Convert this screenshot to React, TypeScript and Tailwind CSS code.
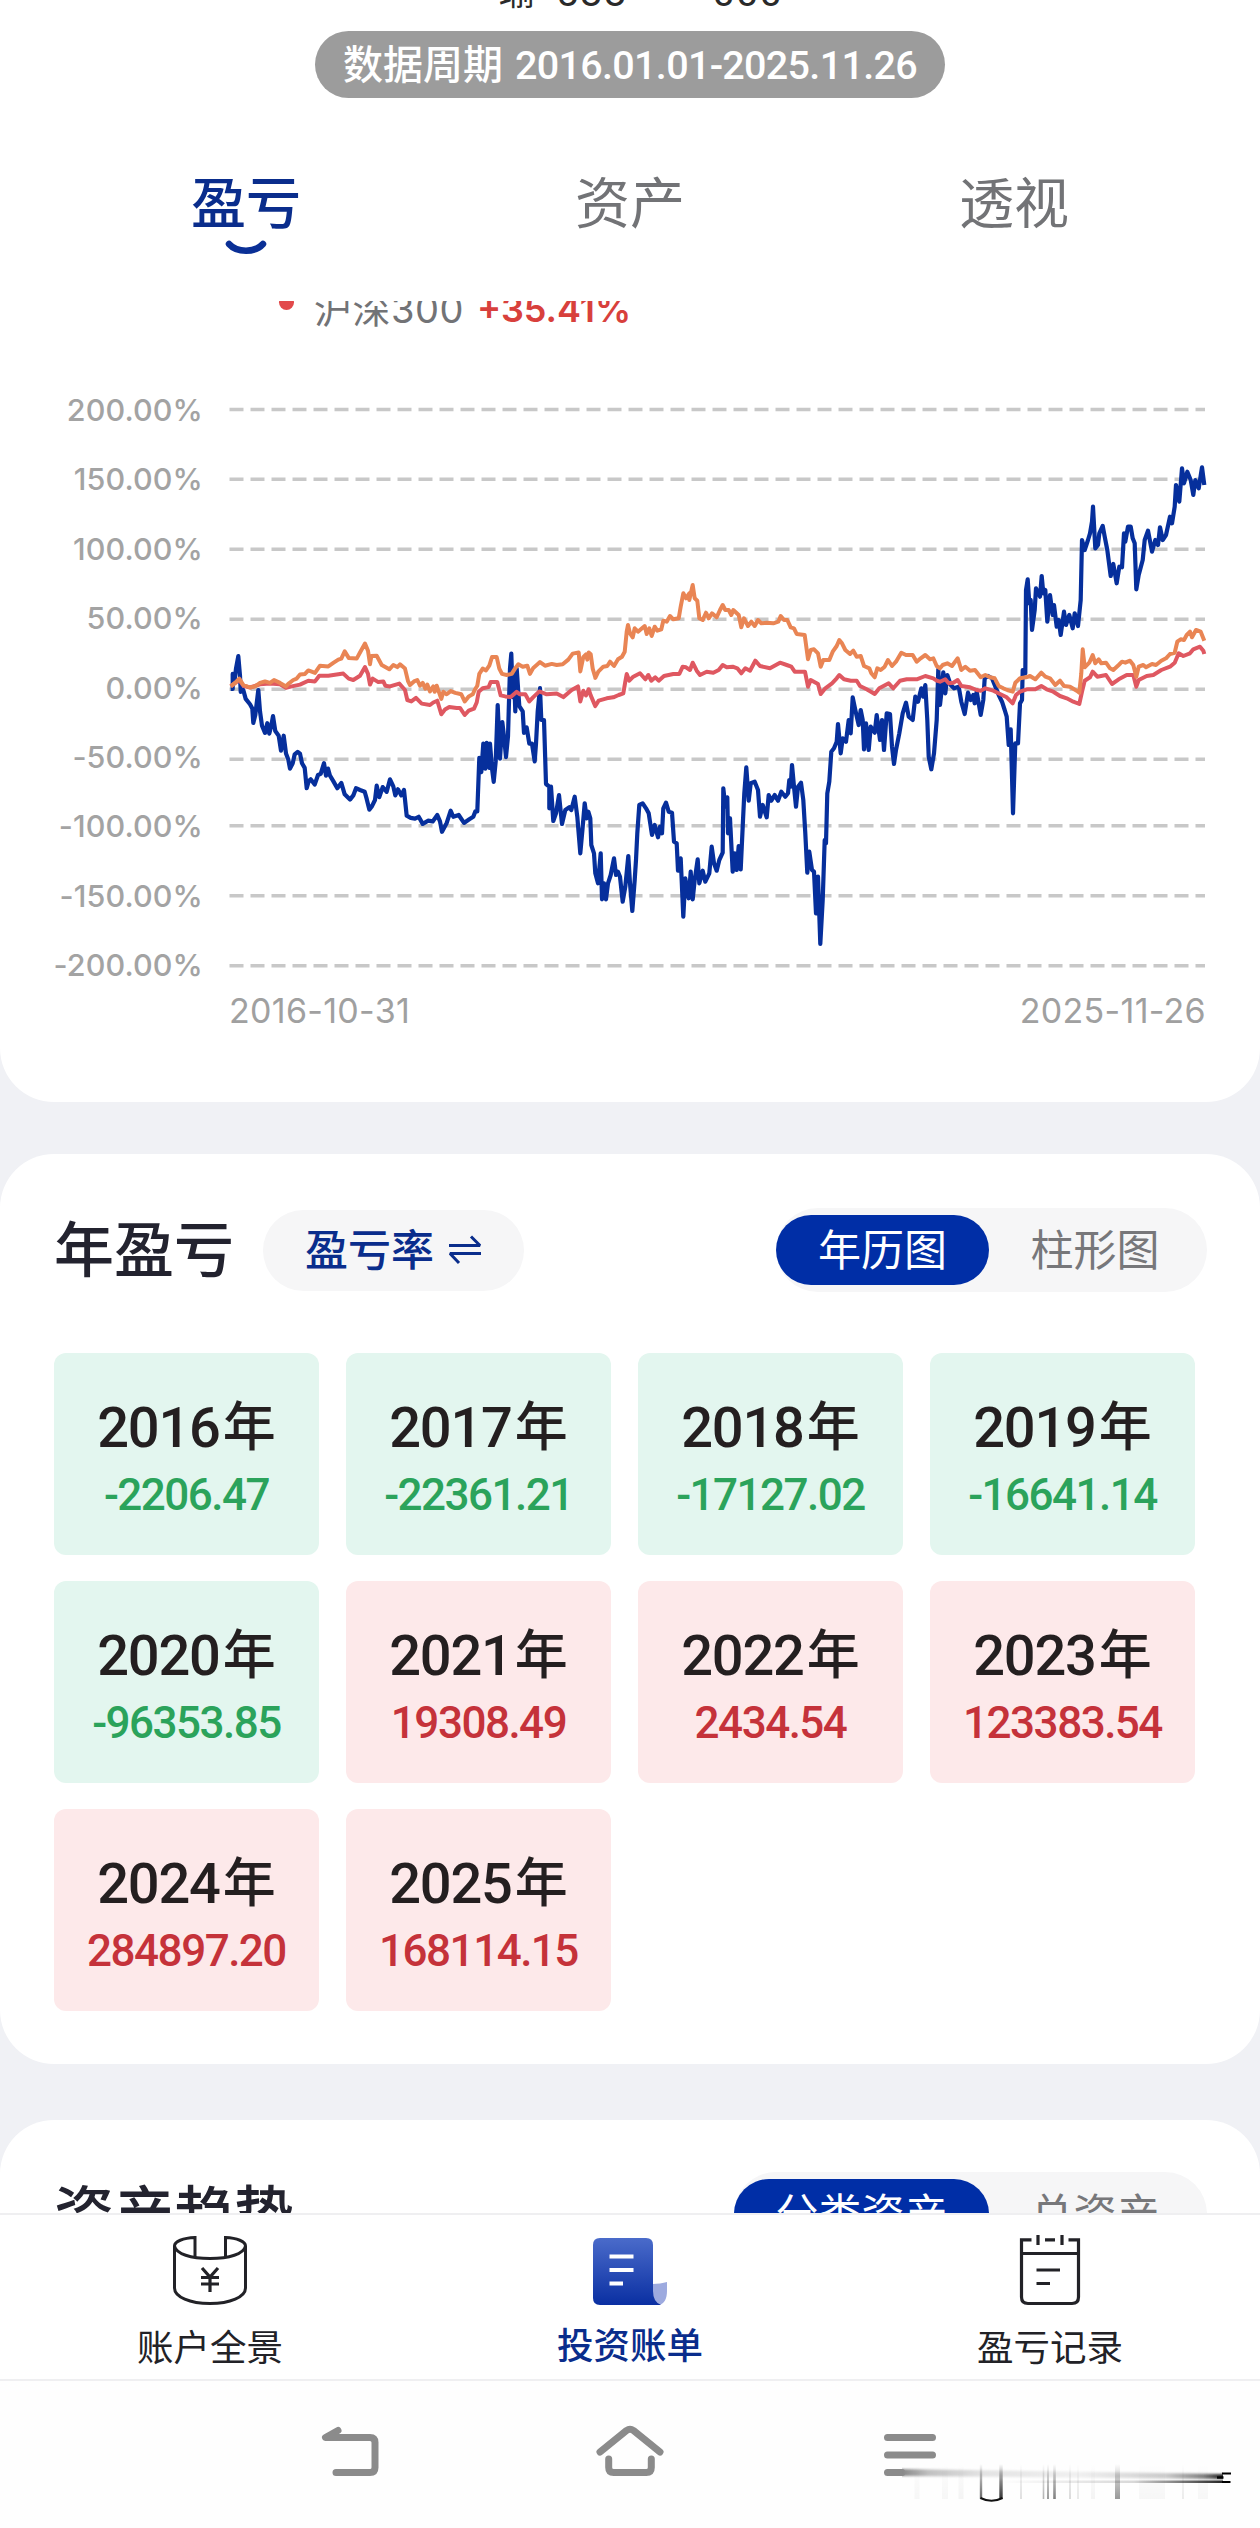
import React from "react";

const CJK = "font-['Roboto','Noto_Sans_CJK_SC',sans-serif]";
const LATIN = "font-['Inter','Noto_Sans_CJK_SC',sans-serif]";

/* Each series is stored in three spans; a span has an origin and a scale. */
type Span = { x: number; y: number; sx: number; sy: number };
const SPANS: Span[] = [
  { x: 200, y: 440, sx: 3, sy: 2.8 },
  { x: 540, y: 560, sx: 3, sy: 3 },
  { x: 860, y: 440, sx: 3, sy: 3 },
];

const ACCOUNT = [
  "92,697 98,697 98,655 104,672 108,640 115,605 120,660 122,705 130,700 137,725 150,740 157,752 160,792 166,770 175,700 180,760 186,800 195,820 202,793 208,822 214,800 219,773 226,815 236,828 243,870 251,828 258,878 265,895 270,920 278,905 284,880 293,873 300,878 306,905 314,918 320,975 326,955 332,950 344,965 354,938 362,935 372,905 378,940 384,920 390,940 400,955 412,975 424,960 434,992 450,1007 460,995 468,975 480,980 494,985 500,1005 508,1035 516,1025 525,1008 530,968 538,1000 548,972 560,985 570,950 580,970 586,995 594,978 604,995 612,980 620,1052 632,1058 645,1060 656,1055 668,1075 684,1066 698,1068 712,1050 720,1068 726,1097 740,1072 752,1038 760,1055 776,1050 792,1072 808,1062 820,1055 826,1040 832,1040 838,890 844,930 850,850 856,920 860,848 868,918 870,850 876,920 881,957 887,900 893,742 900,892 907,790 912,830 918,888 924,830 926,760 930,640 934,598 938,720 942,650 946,760 950,640 958,745 968,760 972,820 980,805 988,850 996,850 1004,900 1008,850 1013,760 1020,695",
  "0,385 4,480 12,480 18,672 28,680 28,745 33,680 40,783 48,760 57,705 66,792 76,750 88,742 94,750 104,710 112,770 121,880 128,800 134,730 140,775 145,755 151,775 154,855 162,880 166,940 174,970 182,880 186,1018 192,970 198,1018 204,970 212,945 222,895 228,945 234,935 240,950 248,1025 256,980 265,888 270,970 277,1053 284,960 288,900 292,820 298,735 308,730 318,745 326,760 336,825 344,795 354,832 360,800 366,820 370,745 378,728 386,755 396,758 402,845 410,850 414,932 422,895 430,1070 436,955 446,1015 452,935 458,1018 464,960 473,898 478,970 488,932 496,965 508,940 515,860 522,910 530,932 538,900 548,878 550,685 556,740 562,712 564,820 570,775 578,935 584,880 590,930 596,858 602,928 608,800 613,700 619,622 626,722 632,670 644,665 654,690 660,770 668,735 680,772 686,705 694,722 704,705 714,722 724,695 736,710 744,700 748,660 752,680 756,615 762,680 768,740 774,680 783,668 790,720 796,820 802,938 808,875 816,930 822,935 828,1060 834,950 841,1152 848,1020 854,840 858,850 862,700 868,665 874,575 882,565 890,545 894,492 902,580 908,535 918,545 926,480 932,520 938,412 946,450 956,495 962,450 968,480 972,568 978,490 986,570 992,500 1004,518 1010,465 1020,540 1026,480 1032,570 1040,460 1050,462 1056,560 1062,612 1068,570 1078,520 1088,460 1098,428 1106,470 1118,480 1126,410 1134,425 1144,385 1150,410 1156,375 1162,480 1166,590 1174,628 1182,580 1190,480",
  "235,688 240,795 244,760 250,697 256,760 262,705 272,735 282,745 296,740 304,785 314,822 324,758 332,780 340,765 344,790 350,755 362,825 370,780 374,715 384,708 396,715 404,735 416,765 426,785 434,810 440,830 446,915 452,868 459,1120 466,910 474,910 480,790 486,780 488,690 496,700 498,450 503,418 508,490 512,480 516,570 524,510 528,445 540,470 545,408 550,460 556,450 562,545 570,465 578,525 582,495 590,560 596,540 602,585 612,515 618,555 628,525 638,565 644,520 654,558 662,480 666,300 674,330 684,300 690,280 696,245 699,200 706,325 714,315 718,280 728,258 734,290 742,330 752,408 760,372 770,430 778,380 786,382 792,280 796,305 804,260 812,260 818,295 824,310 829,448 836,405 848,360 854,300 864,272 876,335 886,300 894,315 900,262 908,300 918,285 930,230 936,250 944,200 948,135 958,185 966,85 972,130 982,95 992,120 1000,165 1006,120 1016,145 1026,82 1033,135",
];

const FUND_INDEX = [
  "92,690 105,680 118,668 130,686 150,693 165,690 180,680 195,676 210,680 222,672 240,680 258,690 265,683 280,672 290,668 300,657 315,655 325,645 345,652 360,632 385,634 400,624 415,615 424,612 434,592 446,610 470,612 480,595 495,570 504,590 510,628 514,605 530,604 545,630 568,642 580,630 592,636 600,628 615,640 624,675 630,686 642,676 652,672 660,688 668,680 676,696 682,685 690,704 700,690 704,705 710,688 724,725 730,705 740,712 752,703 766,708 784,712 794,732 806,718 818,712 824,700 832,688 838,655 848,640 858,645 868,632 876,608 890,608 898,640 906,655 920,658 935,655 945,640 955,628 968,635 982,632 990,655 1000,638 1010,630 1020,622 1035,632 1055,627 1070,630 1088,628 1105,615 1118,598 1136,595 1141,648 1150,608 1158,600 1162,615 1166,595 1172,600 1178,640 1186,665",
  "166,354 175,335 190,320 202,318 210,305 222,318 234,298 246,290 254,275 260,215 264,195 270,220 278,232 284,205 294,215 306,205 314,198 320,222 328,205 335,228 344,200 352,212 364,208 370,182 380,185 390,168 400,178 416,175 422,140 430,100 438,115 448,100 448,120 458,75 464,115 472,122 478,175 488,180 498,158 506,175 516,160 530,172 540,150 548,135 556,150 566,150 574,165 580,150 596,165 604,202 612,175 624,198 634,185 644,198 654,180 664,190 680,188 700,190 715,185 722,168 732,180 742,180 752,202 762,205 770,222 794,225 804,298 812,270 822,268 834,280 842,320 850,300 868,300 878,275 890,258 898,240 906,250 916,270 930,282 940,272 950,290 962,288 972,318 988,325 994,340 1004,352 1012,325 1022,330 1034,320 1044,300 1056,318 1068,305 1084,278 1098,285 1118,285 1130,305 1142,295 1156,285 1170,298 1180,295 1190,318",
  "230,678 240,685 248,675 262,670 276,678 293,655 304,690 316,680 330,692 345,690 362,712 376,705 390,712 404,715 416,738 430,745 442,750 458,755 466,728 480,715 498,712 510,708 526,718 544,698 556,710 570,715 586,735 600,722 612,738 630,740 650,752 658,758 664,700 668,628 674,682 688,668 698,645 706,670 716,658 724,670 738,668 750,685 760,690 776,675 786,665 796,668 810,662 820,675 829,710 836,680 850,675 858,682 876,672 888,675 904,662 918,655 930,642 944,638 952,605 962,598 972,600 980,585 990,575 996,592 1008,570 1022,575 1033,602",
];

const CSI300 = [
  "92,690 118,672 130,688 150,693 180,684 210,682 240,684 258,694 275,690 300,685 325,674 345,676 358,660 385,660 430,654 446,668 460,672 480,660 495,636 504,655 510,685 518,668 535,678 550,676 556,688 570,690 598,682 615,700 622,728 634,732 648,722 665,738 690,742 700,735 712,730 724,768 735,755 748,748 770,750 780,750 794,770 806,758 822,752 830,735 836,705 848,695 866,692 872,678 892,678 902,715 916,718 932,720 950,705 960,712 976,712 988,732 1000,720 1018,704 1040,712 1070,710 1090,720 1115,700 1134,690 1141,732 1150,702 1158,715 1166,698 1172,715 1186,745",
  "166,438 176,422 200,415 220,412 236,405 250,400 256,365 260,342 268,362 280,350 300,340 316,358 325,345 334,362 346,352 356,362 372,348 400,342 418,342 428,320 438,322 450,330 458,308 470,332 480,345 500,335 520,338 536,330 548,315 560,322 578,320 592,325 604,340 616,325 630,332 646,302 660,318 690,325 720,308 740,315 754,320 764,335 795,335 804,380 812,360 834,372 842,402 856,385 876,370 890,355 898,345 912,358 932,362 950,362 960,378 980,388 1004,402 1018,385 1046,370 1060,385 1080,362 1100,358 1130,358 1156,348 1180,355 1190,362",
  "240,725 256,718 266,730 280,728 293,720 304,738 330,742 350,750 362,752 376,745 400,752 420,762 440,772 458,790 468,765 480,755 500,748 526,748 544,738 560,748 580,755 600,768 620,775 640,785 658,792 666,755 674,722 690,712 698,695 712,710 738,705 756,732 776,718 800,705 820,705 829,740 836,720 860,708 880,705 904,690 930,680 944,668 956,640 970,648 990,640 1000,628 1020,620 1030,632 1033,642",
];

function toPoints(series: string[]): string {
  return series
    .map((part, i) => {
      const s = SPANS[i];
      return part
        .split(" ")
        .map((pair) => {
          const [px, py] = pair.split(",").map(Number);
          return `${(s.x + px / s.sx).toFixed(1)},${(s.y + py / s.sy).toFixed(1)}`;
        })
        .join(" ");
    })
    .join(" ");
}

const GRID = [409.5, 479.3, 549.3, 619.3, 689.2, 759.2, 825.8, 895.7, 965.7];
const PERCENTS = ["200.00%", "150.00%", "100.00%", "50.00%", "0.00%", "-50.00%", "-100.00%", "-150.00%", "-200.00%"];

const YEARS = [
  { year: "2016", amount: "-2206.47" },
  { year: "2017", amount: "-22361.21" },
  { year: "2018", amount: "-17127.02" },
  { year: "2019", amount: "-16641.14" },
  { year: "2020", amount: "-96353.85" },
  { year: "2021", amount: "19308.49" },
  { year: "2022", amount: "2434.54" },
  { year: "2023", amount: "123383.54" },
  { year: "2024", amount: "284897.20" },
  { year: "2025", amount: "168114.15" },
];

function Header() {
  return (
    <header className="h-[301px] shrink-0 overflow-hidden bg-white">
      <div className="flex h-[31px] items-end justify-center">
        <div className="mb-[14px] ml-[22px] flex w-[284px] text-[40px] leading-[48px] text-[#2a2a2a]">
          <span className="w-[57px] text-[36px]">瑜</span>
          <span className="w-[157px] tracking-[1.5px]">588</span>
          <span className="tracking-[1px]">000</span>
        </div>
      </div>
      <div className="mx-auto flex h-[67px] w-[630px] items-center justify-center rounded-full bg-[#9c9c9c] pt-[3px] text-[40px] font-medium whitespace-pre text-white">
        <span>数据周期</span>
        <span className="ml-3 text-[39.5px] tracking-[-0.7px]">2016.01.01-2025.11.26</span>
      </div>
      <nav className="mx-[54px] mt-[68px] grid grid-cols-3 text-center text-[55px] leading-[76px] text-[#727376]">
        <div className="flex flex-col items-center font-medium text-[#0a2d8c]">
          <span>盈亏</span>
          <svg className="-mt-[3px]" width="44" height="18" viewBox="0 0 44 18" fill="none">
            <path d="M5 5C13 14 31 14 39 5" stroke="#0a2f96" strokeWidth="6.5" strokeLinecap="round" />
          </svg>
        </div>
        <span>资产</span>
        <span>透视</span>
      </nav>
    </header>
  );
}

function ProfitChart() {
  return (
    <section className={`h-[801px] overflow-hidden rounded-b-[54px] bg-white ${LATIN}`}>
      <div className="-mt-[17px] ml-[279px] flex h-[50px] items-center text-[38px] leading-[50px]">
        <i className="mt-[-13px] h-[15px] w-[15px] rounded-full bg-[#e2494b]" />
        <span className="ml-[20px] tracking-[0.5px] text-[#727376]">沪深300</span>
        <span className="ml-[13px] text-[36px] font-semibold text-[#d8403c]">+35.41%</span>
      </div>
      <div className="mt-[41px] flex">
        <div className="flex w-[203px] flex-col text-right text-[30.5px] font-medium tracking-[0.1px] text-[#a3a3a3]">
          {PERCENTS.map((p) => (
            <span key={p} className="h-[69.4px] leading-[69.4px]">
              {p}
            </span>
          ))}
        </div>
        <svg className="ml-[22px] shrink-0" width="985" height="615" viewBox="225 375 985 615" fill="none">
          {GRID.map((y) => (
            <line key={y} x1="229.5" x2="1205" y1={y} y2={y} stroke="#c8c8c8" strokeWidth="3.4" strokeDasharray="14 7" />
          ))}
          <polyline points={toPoints(ACCOUNT)} stroke="#062f9c" strokeWidth="4.2" strokeLinejoin="round" />
          <polyline points={toPoints(CSI300)} stroke="#df5861" strokeWidth="4" strokeLinejoin="round" />
          <polyline points={toPoints(FUND_INDEX)} stroke="#e98554" strokeWidth="4" strokeLinejoin="round" />
        </svg>
      </div>
      <div className="-mt-[11px] ml-[229px] flex w-[977px] justify-between text-[34px] leading-[44px] tracking-[0.3px] text-[#a0a0a0]">
        <span>2016-10-31</span>
        <span>2025-11-26</span>
      </div>
    </section>
  );
}

function SwapIcon() {
  return (
    <svg width="34" height="34" viewBox="0 0 34 34" fill="none" stroke="#0a2d8c" strokeWidth="3">
      <path d="M1 12.5H32L23 3.5" strokeLinejoin="bevel" />
      <path d="M33 20.500H2L11 30" strokeLinejoin="bevel" />
    </svg>
  );
}

function Segment({ left, right, leftClass }: { left: string; right: string; leftClass: string }) {
  return (
    <div className="flex h-[84px] items-center rounded-full bg-[#f6f6f7] text-[43px]">
      <span className={`flex h-[70px] items-center justify-center rounded-full bg-[#002ea6] pt-[2px] text-white ${leftClass}`}>
        {left}
      </span>
      <span className="w-[218px] pt-[2px] pr-1.5 text-center text-[#77777a]">{right}</span>
    </div>
  );
}

function YearlyCard() {
  return (
    <section className="mt-[52px] h-[910px] rounded-[54px] bg-white pt-[54px] pr-[53px] pl-[54px]">
      <div className="flex h-[84px] items-center">
        <h2 className="w-[209px] pt-[4px] text-[60px] leading-[84px] font-medium text-[#23232f]">年盈亏</h2>
        <div className="flex h-[81px] w-[261px] items-center justify-center gap-[14px] rounded-full bg-[#f6f6f7] text-[43px] font-medium text-[#0a2d8c]">
          <span className="pt-[2px]">盈亏率</span>
          <SwapIcon />
        </div>
        <div className="ml-auto">
          <Segment left="年历图" right="柱形图" leftClass="w-[213px]" />
        </div>
      </div>
      <div className="mt-[61px] grid w-[1141px] grid-cols-4 gap-x-[27px] gap-y-[26px]">
        {YEARS.map(({ year, amount }) => {
          const loss = amount.startsWith("-");
          return (
            <div
              key={year}
              className={`flex h-[202px] flex-col items-center rounded-[12px] pt-[38px] font-medium ${loss ? "bg-[#e3f6ef]" : "bg-[#fde9ea]"}`}
            >
              <div className="flex h-[74px] items-center leading-[74px] text-[#241f20]">
                <span className="text-[56px] tracking-[-1.2px]">{year}</span>
                <span className="ml-[3px] text-[53px]">年</span>
              </div>
              <span
                className={`text-[44px] leading-[60px] tracking-[-1.5px] ${loss ? "text-[#2ba35b]" : "text-[#c5323a]"}`}
              >
                {amount}
              </span>
            </div>
          );
        })}
      </div>
    </section>
  );
}

function TrendCard() {
  return (
    <section className="mt-[56px] h-[93px] overflow-hidden rounded-t-[54px] bg-white pt-[52px] pr-[53px] pl-[54px]">
      <div className="flex h-[84px] items-center justify-between">
        <h2 className="pt-[4px] text-[60px] leading-[84px] font-medium text-[#23232f]">资产趋势</h2>
        <Segment left="分类资产" right="总资产" leftClass="w-[255px]" />
      </div>
    </section>
  );
}

function PanoramaIcon() {
  return (
    <svg width="80" height="76" viewBox="170 2232 80 76" fill="none" stroke="#222227" strokeWidth="3">
      <path d="M195 2257V2237.500C183 2238 174.500 2241.500 174.500 2246V2288C174.500 2297 190 2303.500 210 2303.500S245.500 2297 245.500 2288V2246C245.500 2241.500 237 2238 225.500 2237.500V2256" />
      <path d="M174.500 2246C176 2254 191 2258.500 210 2258.500S244 2254 245.500 2246" />
      <path d="M202 2268L210 2277L218 2268M201 2277.500H219M201 2284H219M210 2277V2292" strokeWidth="3.2" />
    </svg>
  );
}

function BillIcon() {
  return (
    <svg width="80" height="76" viewBox="590 2232 80 76" fill="none">
      <defs>
        <linearGradient id="bill" x1="0" y1="0" x2="0" y2="1">
          <stop offset="0" stopColor="#4a6bca" />
          <stop offset="1" stopColor="#0a2fa2" />
        </linearGradient>
      </defs>
      <path d="M653 2284C657 2284 663 2283 667 2282V2291C667 2299 664 2304 659 2305C655 2305 652 2298 652 2292Z" fill="#9daadf" />
      <path d="M600 2238H646Q653 2238 653 2245V2291Q653 2302 661 2305H600Q593 2305 593 2298V2245Q593 2238 600 2238Z" fill="url(#bill)" />
      <path d="M609.500 2256.500H633.500M609.500 2270H633.500M609.500 2283.500H623" stroke="#fff" strokeWidth="4" />
    </svg>
  );
}

function RecordIcon() {
  return (
    <svg width="80" height="76" viewBox="1010 2232 80 76" fill="none" stroke="#222227" strokeWidth="3.2">
      <path d="M1031.500 2239.800H1021.500V2297Q1021.500 2303.500 1028 2303.500H1072Q1078.500 2303.500 1078.500 2297V2239.800H1068.500M1045 2239.800H1055" />
      <path d="M1038 2235V2245M1062 2235V2245M1021.500 2253.500H1078.500M1036.500 2270H1060M1036.500 2283.500H1050" />
    </svg>
  );
}

function TabBar() {
  const tabs = [
    { label: "账户全景", icon: <PanoramaIcon />, active: false },
    { label: "投资账单", icon: <BillIcon />, active: true },
    { label: "盈亏记录", icon: <RecordIcon />, active: false },
  ];
  return (
    <nav className="grid h-[168px] shrink-0 grid-cols-3 border-y-2 border-[#efeff1] bg-white">
      {tabs.map((t) => (
        <div key={t.label} className="flex flex-col items-center pt-[17px]">
          {t.icon}
          <span
            className={`text-[36.5px] leading-[48px] ${t.active ? "mt-[15px] font-medium text-[#0a2d8c]" : "mt-[17px] text-[#222227]"}`}
          >
            {t.label}
          </span>
        </div>
      ))}
    </nav>
  );
}

const STREAKS = [
  { x: 981, w: 2.4, o: 0.6 },
  { x: 1001, w: 3.4, o: 0.8 },
  { x: 1021, w: 1.2, o: 0.2 },
  { x: 1043.5, w: 1.6, o: 0.3 },
  { x: 1048, w: 2, o: 0.4 },
  { x: 1054.5, w: 2.6, o: 0.5 },
  { x: 1070, w: 1.4, o: 0.2 },
  { x: 1078, w: 1.2, o: 0.14 },
  { x: 1117.5, w: 5, o: 0.4 },
  { x: 1183, w: 1.2, o: 0.12 },
  { x: 917, w: 5, o: 0.03 },
  { x: 945, w: 6, o: 0.03 },
  { x: 961, w: 5, o: 0.04 },
  { x: 1093, w: 4, o: 0.04 },
  { x: 1152, w: 26, o: 0.03 },
  { x: 1203, w: 10, o: 0.03 },
];

function SystemBar() {
  return (
    <footer className="h-[147px] shrink-0 bg-[#fefefe]">
      <svg className="block" width="1260" height="147" viewBox="0 2381 1260 147" fill="none">
        <defs>
          <linearGradient id="smear" x1="903" x2="1223" y1="0" y2="0" gradientUnits="userSpaceOnUse">
            <stop offset="0" stopColor="#8a8a8a" />
            <stop offset="0.08" stopColor="#c0c0c0" />
            <stop offset="0.24" stopColor="#e2e2e2" />
            <stop offset="0.55" stopColor="#f0f0f0" />
            <stop offset="0.82" stopColor="#cccccc" />
            <stop offset="0.94" stopColor="#808080" />
            <stop offset="1" stopColor="#222" />
          </linearGradient>
          <linearGradient id="smearLow" x1="1000" x2="1223" y1="0" y2="0" gradientUnits="userSpaceOnUse">
            <stop offset="0" stopColor="#000" stopOpacity="0" />
            <stop offset="0.6" stopColor="#000" stopOpacity="0.15" />
            <stop offset="1" stopColor="#000" stopOpacity="0.85" />
          </linearGradient>
          <linearGradient id="streak" x1="0" x2="0" y1="2464" y2="2499" gradientUnits="userSpaceOnUse">
            <stop offset="0" stopColor="#000" stopOpacity="0" />
            <stop offset="0.5" stopColor="#000" stopOpacity="0.6" />
            <stop offset="1" stopColor="#000" />
          </linearGradient>
          <filter id="soft" x="-5%" y="-100%" width="110%" height="300%">
            <feGaussianBlur stdDeviation="0.3 1.2" />
          </filter>
        </defs>
        <g stroke="#8b8b8b" strokeWidth="7" strokeLinecap="round" strokeLinejoin="round">
          <path d="M338 2430.500L325.500 2437.500H370Q375 2437.500 375 2442.500V2467.500Q375 2472.500 370 2472.500H336" />
          <path d="M600 2452L626.500 2430.500Q630 2428 633.500 2430.500L660 2452" />
          <path d="M608.700 2459V2467.500Q608.700 2472.500 613.700 2472.500H646.300Q651.300 2472.500 651.300 2467.500V2459" />
          <path d="M887.500 2437.500H932.500M887.500 2455H932.500M887.500 2472.500H902" />
        </g>
        <path d="M902 2469L1223 2474V2479L902 2476Z" fill="url(#smear)" filter="url(#soft)" />
        <rect x="1000" y="2480.500" width="223" height="2.500" fill="url(#smearLow)" />
        {STREAKS.map((s) => (
          <rect key={s.x} x={s.x - s.w / 2} y="2464" width={s.w} height="35" fill="url(#streak)" opacity={s.o} />
        ))}
        <path d="M980.500 2498Q991.500 2503.500 1002.500 2498" stroke="#111" strokeWidth="2" />
        <path d="M1222 2473.500H1231M1222 2482H1230.500" stroke="#000" strokeWidth="2.200" />
        <path d="M1217 2477.500H1223.500" stroke="#000" strokeWidth="2.400" />
      </svg>
    </footer>
  );
}

export default function App() {
  return (
    <div className={`flex h-[2528px] w-[1260px] flex-col overflow-hidden bg-[#f0f1f5] ${CJK}`}>
      <Header />
      <main className="h-[1912px] shrink-0 overflow-hidden">
        <ProfitChart />
        <YearlyCard />
        <TrendCard />
      </main>
      <TabBar />
      <SystemBar />
    </div>
  );
}
